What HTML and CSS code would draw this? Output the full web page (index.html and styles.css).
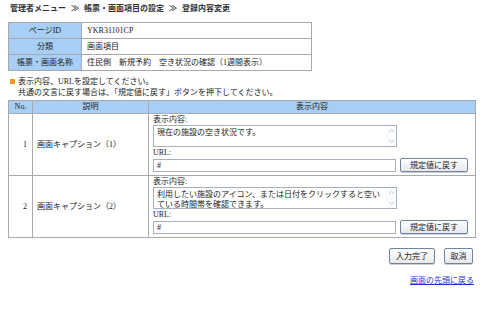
FILE: index.html
```html
<!DOCTYPE html>
<html lang="ja">
<head>
    <meta charset="UTF-8">
    <title>登録内容変更</title>
    <link rel="stylesheet" href="styles.css">
</head>
<body>
    <div class="page">
        <div class="breadcrumb">
            <span>管理者メニュー</span>
            <span class="sep">≫</span>
            <span>帳票・画面項目の設定</span>
            <span class="sep">≫</span>
            <span>登録内容変更</span>
        </div>

        <table class="info-table">
            <tr>
                <th>ページID</th>
                <td>YKR31101CP</td>
            </tr>
            <tr>
                <th>分類</th>
                <td>画面項目</td>
            </tr>
            <tr>
                <th>帳票・画面名称</th>
                <td>住民側　新規予約　空き状況の確認（1週間表示）</td>
            </tr>
        </table>

        <div class="note">
            <span class="note-mark"></span>
            <div>
                <p>表示内容、URLを設定してください。</p>
                <p>共通の文言に戻す場合は、「規定値に戻す」ボタンを押下してください。</p>
            </div>
        </div>

        <table class="edit-table">
            <tr>
                <th class="col-no">No.</th>
                <th class="col-desc">説明</th>
                <th class="col-content">表示内容</th>
            </tr>
            <tr>
                <td class="num">1</td>
                <td class="desc">画面キャプション（1）</td>
                <td class="content">
                    <div class="field-label">表示内容:</div>
                    <div class="textbox">
                        <textarea rows="2">現在の施設の空き状況です。</textarea>
                        <span class="scroll">
                            <svg width="7" height="5" viewBox="0 0 7 5"><path d="M1 4 L3.5 1.5 L6 4" fill="none" stroke="#c3c8ce" stroke-width="1"/></svg>
                            <svg width="7" height="5" viewBox="0 0 7 5"><path d="M1 1 L3.5 3.5 L6 1" fill="none" stroke="#c3c8ce" stroke-width="1"/></svg>
                        </span>
                    </div>
                    <div class="field-label">URL:</div>
                    <div class="url-row">
                        <input type="text" value="#">
                        <button class="btn">規定値に戻す</button>
                    </div>
                </td>
            </tr>
            <tr>
                <td class="num">2</td>
                <td class="desc">画面キャプション（2）</td>
                <td class="content">
                    <div class="field-label">表示内容:</div>
                    <div class="textbox">
                        <textarea rows="2">利用したい施設のアイコン、または日付をクリックすると空いている時間帯を確認できます。</textarea>
                        <span class="scroll">
                            <svg width="7" height="5" viewBox="0 0 7 5"><path d="M1 4 L3.5 1.5 L6 4" fill="none" stroke="#c3c8ce" stroke-width="1"/></svg>
                            <svg width="7" height="5" viewBox="0 0 7 5"><path d="M1 1 L3.5 3.5 L6 1" fill="none" stroke="#c3c8ce" stroke-width="1"/></svg>
                        </span>
                    </div>
                    <div class="field-label">URL:</div>
                    <div class="url-row">
                        <input type="text" value="#">
                        <button class="btn">規定値に戻す</button>
                    </div>
                </td>
            </tr>
        </table>

        <div class="actions">
            <button class="btn btn-submit">入力完了</button>
            <button class="btn btn-cancel">取消</button>
        </div>

        <div class="back-link">
            <a href="#">画面の先頭に戻る</a>
        </div>
    </div>
</body>
</html>
```

FILE: styles.css
```css
:root {
    --head-bg: #a7cff5;
    --line: #a9a9a9;
    --input-line: #a7b1bd;
    --text: #222222;
}

* {
    margin: 0;
    padding: 0;
    box-sizing: border-box;
}

body {
    font-family: "Liberation Serif", "Noto Sans CJK JP", serif;
    font-size: 8px;
    line-height: 10px;
    color: var(--text);
    background: #ffffff;
}

.page {
    width: 500px;
    padding: 4px 8px 0 8px;
}

/* breadcrumb */
.breadcrumb {
    display: flex;
    gap: 4px;
    padding-left: 2px;
    font-weight: bold;
    font-size: 8px;
    line-height: 10px;
    color: #333;
}

.breadcrumb .sep {
    padding: 0 1px;
}

/* info table */
.info-table {
    margin-top: 8px;
    width: 304px;
    border-collapse: collapse;
    border: 1px solid #999;
}

.info-table th,
.info-table td {
    border: 1px solid var(--line);
    height: 16px;
    font-weight: normal;
    text-align: left;
    vertical-align: middle;
}

.info-table th {
    width: 73px;
    background: var(--head-bg);
    text-align: center;
}

.info-table td {
    padding-left: 5px;
}

/* note */
.note {
    display: flex;
    gap: 3px;
    margin-top: 5px;
    padding-left: 2px;
    line-height: 11px;
}

.note-mark {
    width: 5px;
    height: 5px;
    margin-top: 3px;
    background: #f39a1e;
}

/* edit table */
.edit-table {
    margin-top: 2px;
    width: 468px;
    border-collapse: collapse;
    border: 1px solid #999;
}

.edit-table th,
.edit-table td {
    border: 1px solid var(--line);
}

.edit-table th {
    height: 13px;
    background: var(--head-bg);
    font-weight: normal;
    text-align: center;
}

.col-no {
    width: 24px;
}

.col-desc {
    width: 116px;
}

.edit-table td.num {
    text-align: right;
    padding-right: 5px;
}

.edit-table td.desc {
    padding-left: 4px;
}

.edit-table td.content {
    height: 62px;
    padding: 1px 4px 3px 4px;
}

.field-label {
    height: 10px;
}

.textbox {
    display: flex;
    width: 244px;
    height: 22px;
    border: 1px solid var(--input-line);
    margin-bottom: 1px;
}

.textbox textarea {
    flex: 1;
    border: none;
    resize: none;
    overflow: hidden;
    padding: 1px 3px;
    font-family: "Noto Sans CJK JP", sans-serif;
    font-size: 8px;
    line-height: 10px;
    color: var(--text);
    background: transparent;
}

.scroll {
    width: 10px;
    display: flex;
    flex-direction: column;
    justify-content: space-between;
    align-items: center;
    padding: 2px 0;
    background: #fafbfc;
}

.scroll svg {
    display: block;
}

.url-row {
    display: flex;
    gap: 4px;
    align-items: center;
}

.url-row input {
    width: 243px;
    height: 13px;
    border: 1px solid var(--input-line);
    padding: 0 3px;
    font-family: "Liberation Serif", serif;
    font-size: 8px;
    color: var(--text);
}

.btn {
    height: 14px;
    border: 1px solid #6f84a0;
    border-radius: 2px;
    background: linear-gradient(#ffffff, #e6e8eb);
    font-family: "Noto Sans CJK JP", sans-serif;
    font-size: 8px;
    line-height: 10px;
    color: var(--text);
    box-shadow: 0 1px 0 #c9d0d9;
}

.url-row .btn {
    width: 68px;
}

/* bottom actions */
.actions {
    display: flex;
    justify-content: flex-end;
    gap: 9px;
    width: 465px;
    margin-top: 10px;
}

.actions .btn {
    height: 16px;
}

.btn-submit {
    width: 46px;
}

.btn-cancel {
    width: 29px;
}

.back-link {
    width: 466px;
    margin-top: 11px;
    text-align: right;
}

.back-link a {
    color: #1a33cc;
    font-family: "Noto Sans CJK JP", sans-serif;
    font-size: 8px;
}
```
